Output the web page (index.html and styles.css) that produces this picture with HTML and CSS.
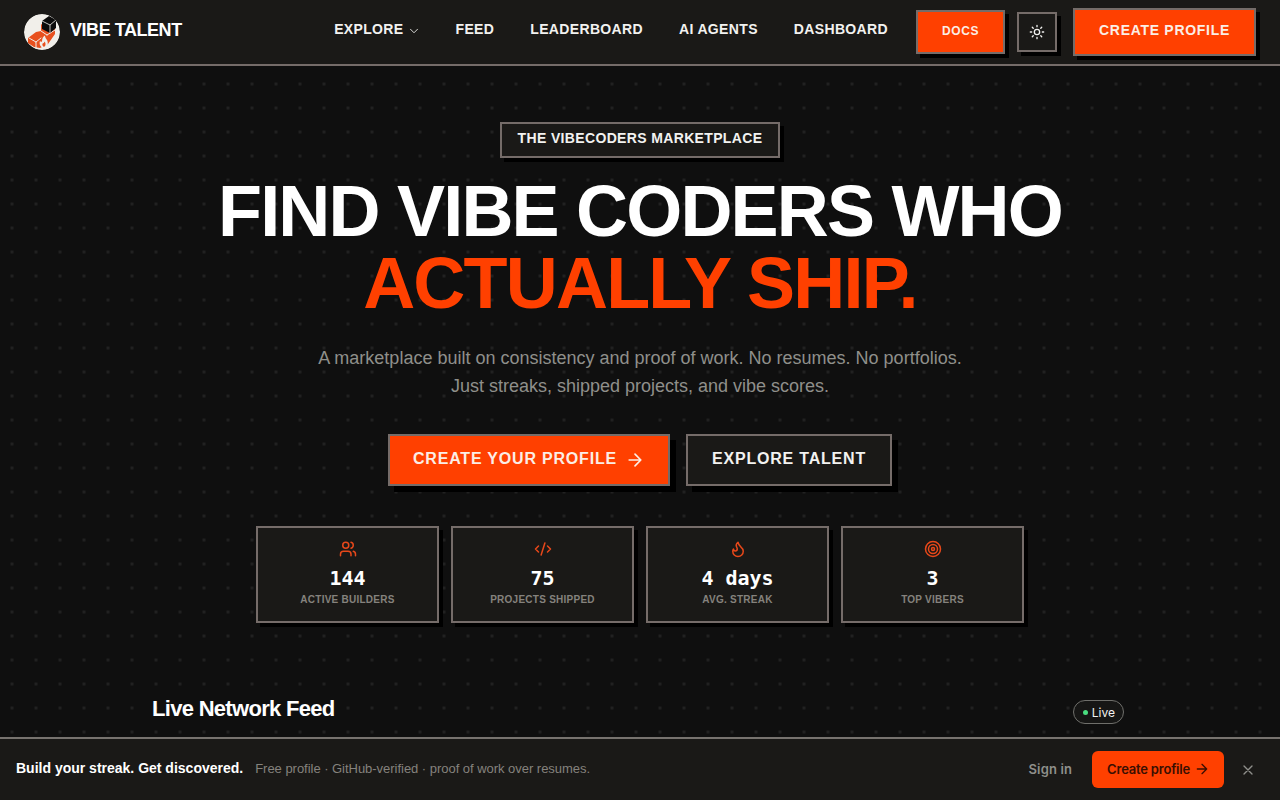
FILE: index.html
```html
<!DOCTYPE html>
<html lang="en">
<head>
    <meta charset="UTF-8">
    <meta name="viewport" content="width=device-width, initial-scale=1.0">
    <title>Vibe Talent</title>
    <link rel="stylesheet" href="styles.css">
</head>
<body>
    <header class="site-header">
        <a class="brand" href="#">
            <svg class="brand-logo" viewBox="0 0 36 36">
                <circle cx="18" cy="18" r="18" fill="#f1efea"/>
                <path d="M4 24l8-6 5-1v-7l3 2 11 3v5l-7 10-8 4-6-1-6-4z" fill="#e8501e"/>
                <path d="M5 24l7 4v6M12 28l5-4M17 17l6 4M23 21l8-5" stroke="#f1efea" stroke-width="1" fill="none"/>
                <path d="M18 7l7-5 7 4v8l-6 5-8-4z" fill="#0b0b0b"/>
                <path d="M18 7l8 4 6-5M26 11v8" stroke="#f1efea" stroke-width=".8" fill="none"/>
                <path d="M20 34c-4-1-5-4-4-7 1 1 1.500 1 2 .5 0-3 1-5 3-6 0 2 1 3 2 4.500 1 2 2 6-3 8.500z" fill="#f1efea"/>
                <path d="M20 33c-2-1-2-3-1-4 .5.500 1 0 1.500-1.500 1 1 2 4-.5 5.500z" fill="#e8501e"/>
            </svg>
            <span class="brand-name">VIBE TALENT</span>
        </a>
        <nav class="main-nav">
            <a href="#" class="nav-link">EXPLORE
                <svg class="nav-chevron" viewBox="0 0 24 24"><path d="m6 9 6 6 6-6"/></svg>
            </a>
            <a href="#" class="nav-link">FEED</a>
            <a href="#" class="nav-link">LEADERBOARD</a>
            <a href="#" class="nav-link">AI AGENTS</a>
            <a href="#" class="nav-link">DASHBOARD</a>
        </nav>
        <div class="header-actions">
            <a href="#" class="btn-docs">DOCS</a>
            <button class="btn-theme">
                <svg viewBox="0 0 24 24"><circle cx="12" cy="12" r="4"/><path d="M12 2v2M12 20v2M4.930 4.930l1.410 1.410M17.660 17.660l1.410 1.410M2 12h2M20 12h2M6.340 17.660l-1.410 1.410M19.070 4.930l-1.410 1.410"/></svg>
            </button>
            <a href="#" class="btn-create">CREATE PROFILE</a>
        </div>
    </header>

    <main>
        <section class="hero">
            <div class="hero-badge">THE VIBECODERS MARKETPLACE</div>
            <h1 class="hero-title">
                <span class="title-line">FIND VIBE CODERS WHO</span>
                <span class="title-line accent">ACTUALLY SHIP.</span>
            </h1>
            <p class="hero-text">A marketplace built on consistency and proof of work. No resumes. No portfolios.<br>Just streaks, shipped projects, and vibe scores.</p>
            <div class="hero-buttons">
                <a href="#" class="btn-primary">CREATE YOUR PROFILE
                    <svg viewBox="0 0 24 24"><path d="M5 12h14M12 5l7 7-7 7"/></svg>
                </a>
                <a href="#" class="btn-secondary">EXPLORE TALENT</a>
            </div>
            <div class="stats">
                <div class="stat-card">
                    <svg class="stat-icon" viewBox="0 0 24 24"><path d="M16 21v-2a4 4 0 0 0-4-4H6a4 4 0 0 0-4 4v2"/><circle cx="9" cy="7" r="4"/><path d="M22 21v-2a4 4 0 0 0-3-3.870M16 3.130a4 4 0 0 1 0 7.750"/></svg>
                    <div class="stat-value">144</div>
                    <div class="stat-label">ACTIVE BUILDERS</div>
                </div>
                <div class="stat-card">
                    <svg class="stat-icon" viewBox="0 0 24 24"><path d="m18 16 4-4-4-4M6 8l-4 4 4 4M14.500 4l-5 16"/></svg>
                    <div class="stat-value">75</div>
                    <div class="stat-label">PROJECTS SHIPPED</div>
                </div>
                <div class="stat-card">
                    <svg class="stat-icon" viewBox="0 0 24 24"><path d="M8.500 14.500A2.500 2.500 0 0 0 11 12c0-1.380-.5-2-1-3-1.072-2.143-.224-4.054 2-6 .5 2.500 2 4.900 4 6.500 2 1.600 3 3.500 3 5.500a7 7 0 1 1-14 0c0-1.153.433-2.294 1-3a2.500 2.500 0 0 0 2.500 2.500z"/></svg>
                    <div class="stat-value">4 days</div>
                    <div class="stat-label">AVG. STREAK</div>
                </div>
                <div class="stat-card">
                    <svg class="stat-icon" viewBox="0 0 24 24"><circle cx="12" cy="12" r="10"/><circle cx="12" cy="12" r="6"/><circle cx="12" cy="12" r="2"/></svg>
                    <div class="stat-value">3</div>
                    <div class="stat-label">TOP VIBERS</div>
                </div>
            </div>
        </section>

        <section class="feed">
            <h2 class="feed-title">Live Network Feed</h2>
            <span class="live-pill"><span class="live-dot"></span>Live</span>
        </section>
    </main>

    <div class="signup-bar">
        <div class="signup-copy">
            <strong class="signup-title">Build your streak. Get discovered.</strong>
            <span class="signup-text">Free profile · GitHub-verified · proof of work over resumes.</span>
        </div>
        <div class="signup-actions">
            <a href="#" class="signup-signin">Sign in</a>
            <a href="#" class="signup-create">Create profile
                <svg viewBox="0 0 24 24"><path d="M5 12h14M12 5l7 7-7 7"/></svg>
            </a>
            <button class="signup-close">
                <svg viewBox="0 0 24 24"><path d="M18 6 6 18M6 6l12 12"/></svg>
            </button>
        </div>
    </div>
</body>
</html>
```

FILE: styles.css
```css
* {
    box-sizing: border-box;
}

html, body {
    height: 100%;
}

body {
    margin: 0;
    overflow: hidden;
    font-family: 'Liberation Sans', Arial, sans-serif;
    color: #fff;
    background-color: #0f0f0f;
    background-image: radial-gradient(circle at 12px 12px, #282828 0, transparent 2.5px);
    background-size: 24px 24px;
}

a {
    color: inherit;
    text-decoration: none;
}

svg {
    fill: none;
    stroke: currentColor;
    stroke-width: 2;
    stroke-linecap: round;
    stroke-linejoin: round;
}

/* Header */
.site-header {
    display: flex;
    align-items: center;
    height: 66px;
    padding: 0 24px;
    background-color: #1a1917;
    border-bottom: 2px solid #756c69;
}

.brand {
    display: flex;
    align-items: center;
    gap: 10px;
}

.brand-logo {
    width: 36px;
    height: 36px;
    stroke: none;
    border-radius: 50%;
}

.brand-name {
    padding-bottom: 3px;
    font-size: 18px;
    font-weight: bold;
    letter-spacing: -0.45px;
}

.main-nav {
    display: flex;
    align-items: center;
    gap: 36px;
    margin-left: auto;
    padding-bottom: 6px;
}

.nav-link {
    display: flex;
    align-items: center;
    gap: 4px;
    font-size: 14px;
    font-weight: bold;
    letter-spacing: 0.35px;
    color: #f2f2f0;
}

.nav-chevron {
    width: 14px;
    height: 14px;
    margin: 3px -2px 0 0;
    stroke-width: 1.500;
}

.header-actions {
    display: flex;
    align-items: center;
    margin-left: 28px;
}

.btn-docs {
    display: flex;
    align-items: center;
    justify-content: center;
    width: 89px;
    height: 44px;
    padding-bottom: 3px;
    font-size: 12px;
    font-weight: bold;
    letter-spacing: 0.6px;
    color: #fbeee6;
    background-color: #ff4000;
    border: 2px solid #756c69;
    box-shadow: 4px 4px 0 #000;
}

.btn-theme {
    display: flex;
    align-items: center;
    justify-content: center;
    width: 40px;
    height: 40px;
    margin: 0 16px 0 12px;
    padding: 0;
    color: #f2f2f0;
    background-color: #1a1917;
    border: 2px solid #756c69;
    box-shadow: 4px 4px 0 #000;
}

.btn-theme svg {
    width: 16px;
    height: 16px;
}

.btn-create {
    display: flex;
    align-items: center;
    justify-content: center;
    width: 183px;
    height: 48px;
    padding-bottom: 4px;
    font-size: 14px;
    font-weight: bold;
    letter-spacing: 0.7px;
    color: #fbeee6;
    background-color: #ff4000;
    border: 2px solid #756c69;
    box-shadow: 4px 4px 0 #000;
}

/* Hero */
.hero {
    display: flex;
    flex-direction: column;
    align-items: center;
    padding-top: 56px;
}

.hero-badge {
    height: 36px;
    padding: 0 16px;
    line-height: 28px;
    font-size: 14px;
    font-weight: bold;
    letter-spacing: 0.35px;
    color: #f2f2f0;
    background-color: #1a1917;
    border: 2px solid #756c69;
    box-shadow: 4px 4px 0 #000;
}

.hero-title {
    margin: 17px 0 0;
    font-size: 72px;
    line-height: 72px;
    font-weight: bold;
    letter-spacing: -1.8px;
    text-align: center;
}

.title-line {
    display: block;
}

.accent {
    color: #ff4000;
}

.hero-text {
    margin: 25px 0 0;
    font-size: 18px;
    line-height: 28px;
    color: #8f8f8b;
    text-align: center;
}

.hero-buttons {
    display: flex;
    gap: 16px;
    margin-top: 34px;
}

.btn-primary, .btn-secondary {
    display: flex;
    align-items: center;
    justify-content: center;
    height: 52px;
    padding-bottom: 3px;
    font-size: 16px;
    font-weight: bold;
    letter-spacing: 0.8px;
    border: 2px solid #756c69;
    box-shadow: 6px 6px 0 #000;
}

.btn-primary {
    width: 282px;
    gap: 8px;
    color: #fbeee6;
    background-color: #ff4000;
}

.btn-primary svg {
    width: 20px;
    height: 20px;
    margin-top: 3px;
}

.btn-secondary {
    width: 206px;
    color: #f2f2f0;
    background-color: #1a1917;
}

.stats {
    display: grid;
    grid-template-columns: repeat(4, 183px);
    gap: 12px;
    margin-top: 40px;
}

.stat-card {
    display: flex;
    flex-direction: column;
    align-items: center;
    height: 97px;
    padding-top: 12px;
    background-color: #1a1917;
    border: 2px solid #756c69;
    box-shadow: 4px 4px 0 #000;
}

.stat-icon {
    width: 18px;
    height: 18px;
    color: #e8481a;
}

.stat-value {
    margin-top: 6px;
    font-family: 'DejaVu Sans Mono', monospace;
    font-size: 20px;
    line-height: 28px;
    font-weight: bold;
}

.stat-label {
    margin-top: 1px;
    font-size: 10px;
    line-height: 14px;
    font-weight: bold;
    letter-spacing: 0.25px;
    color: #85827d;
}

/* Feed heading */
.feed {
    display: flex;
    justify-content: space-between;
    width: 972px;
    margin-left: 152px;
    padding-top: 72px;
}

.feed-title {
    margin: 0;
    font-size: 22px;
    line-height: 28px;
    font-weight: bold;
    letter-spacing: -0.7px;
}

.live-pill {
    display: flex;
    align-items: center;
    gap: 4px;
    height: 24px;
    margin-top: 5px;
    padding: 0 8px 0 9px;
    font-family: 'Inter', sans-serif;
    font-size: 12px;
    color: #f2f2f0;
    background-color: #161615;
    border: 1px solid #6f6f6b;
    border-radius: 12px;
}

.live-dot {
    width: 5px;
    height: 5px;
    border-radius: 50%;
    background-color: #4ade80;
}

/* Bottom bar */
.signup-bar {
    position: fixed;
    left: 0;
    right: 0;
    bottom: 0;
    display: flex;
    align-items: center;
    justify-content: space-between;
    height: 63px;
    padding: 0 24px 0 16px;
    background-color: #1a1917;
    border-top: 2px solid #77736f;
}

.signup-copy {
    display: flex;
    align-items: baseline;
    gap: 12px;
    padding-bottom: 3px;
}

.signup-title {
    font-size: 14px;
    font-weight: bold;
}

.signup-text {
    font-size: 13px;
    letter-spacing: -0.03px;
    color: #85827d;
}

.signup-actions {
    display: flex;
    align-items: center;
}

.signup-signin {
    padding-bottom: 2px;
    font-family: 'Inter', sans-serif;
    font-size: 13px;
    font-weight: 600;
    letter-spacing: 0.15px;
    color: #8f8f8b;
}

.signup-create {
    display: flex;
    align-items: center;
    gap: 4px;
    height: 37px;
    margin-left: 20px;
    padding: 0 14px 1px 15px;
    font-family: 'Inter', sans-serif;
    font-size: 13px;
    font-weight: 600;
    letter-spacing: -0.2px;
    color: #3a0f02;
    background-color: #ff4000;
    border-radius: 6px;
}

.signup-create svg {
    width: 16px;
    height: 16px;
}

.signup-close {
    display: flex;
    width: 16px;
    height: 16px;
    margin-left: 16px;
    padding: 0;
    color: #8f8f8b;
    background: none;
    border: none;
}
```
